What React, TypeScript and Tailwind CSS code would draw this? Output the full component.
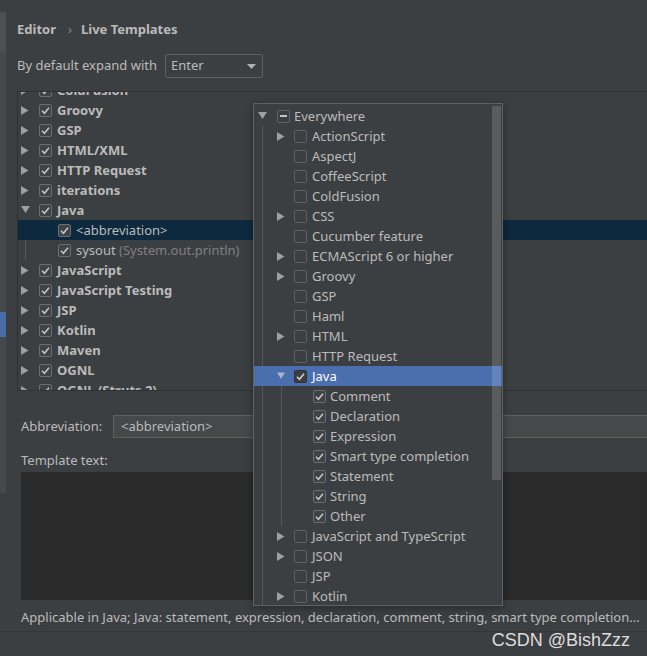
import React from "react";

type CheckState = "on" | "off" | "mixed";

function Check({ state, dim }: { state: CheckState; dim?: boolean }) {
  return (
    <span
      className={`flex h-[13px] w-[13px] shrink-0 items-center justify-center rounded-[2px] border ${
        dim ? "border-[#5e6163] bg-[#3c3f41]" : "border-[#6b6e70] bg-[#404345]"
      }`}
    >
      {state === "on" && (
        <svg width="11" height="11" viewBox="0 0 11 11">
          <path d="M2 5.8 L4.4 8.2 L9 2.8" fill="none" stroke="#c4c4c4" strokeWidth="1.6" />
        </svg>
      )}
      {state === "mixed" && <span className="h-[2px] w-[7px] bg-[#c4c4c4]" />}
    </span>
  );
}

function Arrow({ open }: { open?: boolean }) {
  return open ? (
    <svg width="9" height="8" viewBox="0 0 9 8" className="shrink-0">
      <polygon points="0,0 9,0 4.5,7" fill="#9d9fa1" />
    </svg>
  ) : (
    <svg width="8" height="9" viewBox="0 0 8 9" className="shrink-0">
      <polygon points="0,0 7.5,4.5 0,9" fill="#9d9fa1" />
    </svg>
  );
}

const groups = [
  "ColdFusion",
  "Groovy",
  "GSP",
  "HTML/XML",
  "HTTP Request",
  "iterations",
  "Java",
  "JavaScript",
  "JavaScript Testing",
  "JSP",
  "Kotlin",
  "Maven",
  "OGNL",
  "OGNL (Struts 2)",
];

function GroupRow({ name, open }: { name: string; open?: boolean }) {
  return (
    <div className="flex h-5 items-center pl-[3px]">
      <span className="flex w-[9px] items-center">
        <Arrow open={open} />
      </span>
      <span className="ml-[9px]">
        <Check state="on" />
      </span>
      <span className="ml-[5px] font-bold whitespace-nowrap">{name}</span>
    </div>
  );
}

function ChildRow({ children, selected }: { children: React.ReactNode; selected?: boolean }) {
  return (
    <div className={`flex h-5 items-center ${selected ? "bg-[#0d293e]" : ""}`}>
      <span className="w-[7px]" />
      <span className={`w-px self-stretch ${selected ? "" : "bg-[#585b5d]"}`} />
      <span className="w-[32px]" />
      <Check state="on" />
      <span className="ml-[5px] whitespace-nowrap">{children}</span>
    </div>
  );
}

const contexts: { name: string; arrow?: boolean }[] = [
  { name: "ActionScript", arrow: true },
  { name: "AspectJ" },
  { name: "CoffeeScript" },
  { name: "ColdFusion" },
  { name: "CSS", arrow: true },
  { name: "Cucumber feature" },
  { name: "ECMAScript 6 or higher", arrow: true },
  { name: "Groovy", arrow: true },
  { name: "GSP" },
  { name: "Haml" },
  { name: "HTML", arrow: true },
  { name: "HTTP Request" },
];

const javaKids = ["Comment", "Declaration", "Expression", "Smart type completion", "Statement", "String", "Other"];

const afterJava: { name: string; arrow?: boolean }[] = [
  { name: "JavaScript and TypeScript", arrow: true },
  { name: "JSON", arrow: true },
  { name: "JSP" },
  { name: "Kotlin", arrow: true },
];

function CtxRow({ name, arrow }: { name: string; arrow?: boolean }) {
  return (
    <div className="flex h-5 items-center">
      <span className="w-[8px]" />
      <span className="w-px self-stretch bg-[#55585a]" />
      <span className="w-[14px]" />
      <span className="flex w-[8px] items-center">{arrow && <Arrow />}</span>
      <span className="ml-[9px]">
        <Check state="off" dim />
      </span>
      <span className="ml-[5px] whitespace-nowrap pt-px">{name}</span>
    </div>
  );
}

function ContextPopup() {
  return (
    <div className="absolute left-[253px] top-[103px] h-[503px] w-[250px] overflow-hidden border border-[#5f6163] bg-[#3c3f41] pt-[2px] shadow-[0_2px_8px_rgba(0,0,0,0.35)]">
      <div className="flex h-5 items-center">
        <span className="w-[4px]" />
        <Arrow open />
        <span className="ml-[10px]">
          <Check state="mixed" dim />
        </span>
        <span className="ml-[4px] pt-px">Everywhere</span>
      </div>
      {contexts.map((c) => (
        <CtxRow key={c.name} {...c} />
      ))}
      <div className="flex h-5 items-center bg-[#4b6eaf] text-white">
        <span className="w-[23px]" />
        <span className="flex w-[8px] items-center">
          <svg width="9" height="8" viewBox="0 0 9 8">
            <polygon points="0,0 9,0 4.5,7" fill="#a9b6cc" />
          </svg>
        </span>
        <span className="ml-[9px] flex h-[13px] w-[13px] items-center justify-center rounded-[2px] border border-[#2f3133] bg-[#3c3f41]">
          <svg width="11" height="11" viewBox="0 0 11 11">
            <path d="M2 5.8 L4.4 8.2 L9 2.8" fill="none" stroke="#d0d0d0" strokeWidth="1.6" />
          </svg>
        </span>
        <span className="ml-[5px] pt-px">Java</span>
      </div>
      {javaKids.map((k) => (
        <div key={k} className="flex h-5 items-center">
          <span className="w-[8px]" />
          <span className="w-px self-stretch bg-[#55585a]" />
          <span className="w-[18px]" />
          <span className="w-px self-stretch bg-[#55585a]" />
          <span className="w-[31px]" />
          <Check state="on" />
          <span className="ml-[4px] whitespace-nowrap pt-px">{k}</span>
        </div>
      ))}
      {afterJava.map((c) => (
        <CtxRow key={c.name} {...c} />
      ))}
      <div className="absolute right-[1px] top-[2px] h-[374px] w-[9px] bg-white/15" />
    </div>
  );
}

export default function App() {
  return (
    <div className="relative flex h-[656px] w-[647px] overflow-hidden bg-[#3c3f41] font-['Noto_Sans',Arial,sans-serif] text-[13px] text-[#bbbbbb]">
      <div className="flex w-[6px] shrink-0 flex-col">
        <div className="h-[12px]" />
        <div className="h-[40px] bg-[#4c5052]" />
        <div className="h-[260px] bg-[#45494b]" />
        <div className="h-[25px] bg-[#4a6da8]" />
        <div className="h-[156px] bg-[#45494b]" />
      </div>

      <div className="flex min-w-0 flex-1 flex-col pl-[11px]">
        <div className="flex h-[18px] items-center mt-[20px] leading-[18px]">
          <span className="font-bold">Editor</span>
          <span className="ml-[12px] mr-[9px] text-[#8c8e90]">›</span>
          <span className="font-bold">Live Templates</span>
        </div>

        <div className="mt-[16px] flex h-[24px] items-center">
          <span className="w-[148px]">By default expand with</span>
          <div className="flex h-[24px] w-[98px] items-center justify-between rounded-[2px] border border-[#5e6060] pl-[5px] pr-[5px]">
            <span>Enter</span>
            <svg width="10" height="5" viewBox="0 0 10 5">
              <polygon points="0,0 9,0 4.5,5" fill="#afb1b3" />
            </svg>
          </div>
        </div>

        <div className="mt-[13px] h-[300px] overflow-hidden border-b border-l border-t border-[#2f3133] leading-[20px]">
          <div className="-mt-[12px]">
            {groups.slice(0, 7).map((g) => (
              <GroupRow key={g} name={g} open={g === "Java"} />
            ))}
            <ChildRow selected>&lt;abbreviation&gt;</ChildRow>
            <ChildRow>
              sysout <span className="text-[#808080]">(System.out.println)</span>
            </ChildRow>
            {groups.slice(7).map((g) => (
              <GroupRow key={g} name={g} />
            ))}
          </div>
        </div>

        <div className="mt-[24px] flex h-[23px] items-center pl-[4px]">
          <span className="w-[92px]">Abbreviation:</span>
          <div className="flex h-[23px] flex-1 items-center border border-r-0 border-[#5e6060] bg-[#45494a] pl-[7px]">
            &lt;abbreviation&gt;
          </div>
        </div>

        <div className="mt-[13px] pl-[4px] leading-[18px]">Template text:</div>
        <div className="ml-[4px] mt-[3px] h-[128px] bg-[#2b2b2b]" />

        <div className="mt-[9px] whitespace-nowrap pl-[4px] leading-[16px]">
          Applicable in Java; Java: statement, expression, declaration, comment, string, smart type completion...
        </div>
      </div>

      <div className="absolute bottom-0 left-0 h-[25px] w-full border-t border-[#333537] bg-[#3c3f41]" />

      <ContextPopup />

      <div className="absolute bottom-[6px] right-[17px] font-['Liberation_Sans',Arial,sans-serif] text-[18px] leading-[20px] text-[#dcdcdc]">
        CSDN @BishZzz
      </div>
    </div>
  );
}
